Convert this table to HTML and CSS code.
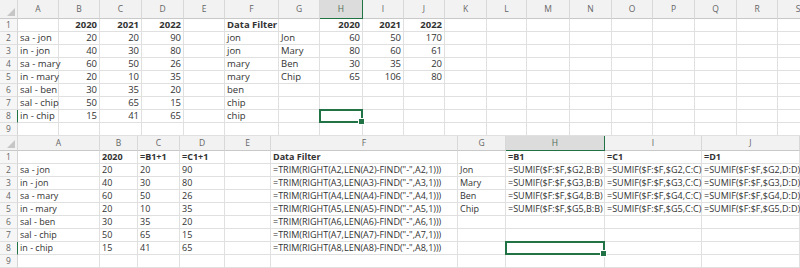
FILE: index.html
```html
<!DOCTYPE html>
<html lang="en">
<head>
    <meta charset="UTF-8">
    <title>Data Filter - SUMIF</title>
    <link rel="stylesheet" href="styles.css">
</head>
<body>

<!-- 结果视图 -->
<table class="sheet values">
    <colgroup>
        <col class="w18"><col class="w41"><col class="w41"><col class="w42"><col class="w42"><col class="w41"><col class="w54"><col class="w41"><col class="w43"><col class="w41"><col class="w41"><col class="w42"><col class="w40"><col class="w43"><col class="w42"><col class="w41"><col class="w42"><col class="w42"><col class="w41"><col class="w41">
    </colgroup>
    <tr class="head">
        <th class="corner"></th><th>A</th><th>B</th><th>C</th><th>D</th><th>E</th><th>F</th><th>G</th><th class="active">H</th><th>I</th><th>J</th><th>K</th><th>L</th><th>M</th><th>N</th><th>O</th><th>P</th><th>Q</th><th>R</th><th>S</th>
    </tr>
    <tr>
        <th>1</th><td></td><td class="num b">2020</td><td class="num b">2021</td><td class="num b">2022</td><td></td><td class="b">Data Filter</td><td></td><td class="num b">2020</td><td class="num b">2021</td><td class="num b">2022</td><td></td><td></td><td></td><td></td><td></td><td></td><td></td><td></td><td></td>
    </tr>
    <tr>
        <th>2</th><td>sa - jon</td><td class="num">20</td><td class="num">20</td><td class="num">90</td><td></td><td>jon</td><td>Jon</td><td class="num">60</td><td class="num">50</td><td class="num">170</td><td></td><td></td><td></td><td></td><td></td><td></td><td></td><td></td><td></td>
    </tr>
    <tr>
        <th>3</th><td>in - jon</td><td class="num">40</td><td class="num">30</td><td class="num">80</td><td></td><td>jon</td><td>Mary</td><td class="num">80</td><td class="num">60</td><td class="num">61</td><td></td><td></td><td></td><td></td><td></td><td></td><td></td><td></td><td></td>
    </tr>
    <tr>
        <th>4</th><td>sa - mary</td><td class="num">60</td><td class="num">50</td><td class="num">26</td><td></td><td>mary</td><td>Ben</td><td class="num">30</td><td class="num">35</td><td class="num">20</td><td></td><td></td><td></td><td></td><td></td><td></td><td></td><td></td><td></td>
    </tr>
    <tr>
        <th>5</th><td>in - mary</td><td class="num">20</td><td class="num">10</td><td class="num">35</td><td></td><td>mary</td><td>Chip</td><td class="num">65</td><td class="num">106</td><td class="num">80</td><td></td><td></td><td></td><td></td><td></td><td></td><td></td><td></td><td></td>
    </tr>
    <tr>
        <th>6</th><td>sal - ben</td><td class="num">30</td><td class="num">35</td><td class="num">20</td><td></td><td>ben</td><td></td><td></td><td></td><td></td><td></td><td></td><td></td><td></td><td></td><td></td><td></td><td></td><td></td>
    </tr>
    <tr>
        <th>7</th><td>sal - chip</td><td class="num">50</td><td class="num">65</td><td class="num">15</td><td></td><td>chip</td><td></td><td></td><td></td><td></td><td></td><td></td><td></td><td></td><td></td><td></td><td></td><td></td><td></td>
    </tr>
    <tr>
        <th class="active">8</th><td>in - chip</td><td class="num">15</td><td class="num">41</td><td class="num">65</td><td></td><td>chip</td><td></td><td class="sel"></td><td></td><td></td><td></td><td></td><td></td><td></td><td></td><td></td><td></td><td></td><td></td>
    </tr>
    <tr>
        <th>9</th><td></td><td></td><td></td><td></td><td></td><td></td><td></td><td></td><td></td><td></td><td></td><td></td><td></td><td></td><td></td><td></td><td></td><td></td><td></td>
    </tr>
</table>

<!-- 公式视图 -->
<table class="sheet formulas">
    <colgroup>
        <col class="w18"><col class="w82"><col class="w38"><col class="w42"><col class="w45"><col class="w46"><col class="w187"><col class="w48"><col class="w99"><col class="w97"><col class="w98">
    </colgroup>
    <tr class="head">
        <th class="corner"></th><th>A</th><th>B</th><th>C</th><th>D</th><th>E</th><th>F</th><th>G</th><th class="active">H</th><th>I</th><th>J</th>
    </tr>
    <tr>
        <th>1</th><td></td><td class="b">2020</td><td class="b">=B1+1</td><td class="b">=C1+1</td><td></td><td class="b">Data Filter</td><td></td><td class="b">=B1</td><td class="b">=C1</td><td class="b">=D1</td>
    </tr>
    <tr>
        <th>2</th><td>sa - jon</td><td>20</td><td>20</td><td>90</td><td></td><td>=TRIM(RIGHT(A2,LEN(A2)-FIND("-",A2,1)))</td><td>Jon</td><td>=SUMIF($F:$F,$G2,B:B)</td><td>=SUMIF($F:$F,$G2,C:C)</td><td>=SUMIF($F:$F,$G2,D:D)</td>
    </tr>
    <tr>
        <th>3</th><td>in - jon</td><td>40</td><td>30</td><td>80</td><td></td><td>=TRIM(RIGHT(A3,LEN(A3)-FIND("-",A3,1)))</td><td>Mary</td><td>=SUMIF($F:$F,$G3,B:B)</td><td>=SUMIF($F:$F,$G3,C:C)</td><td>=SUMIF($F:$F,$G3,D:D)</td>
    </tr>
    <tr>
        <th>4</th><td>sa - mary</td><td>60</td><td>50</td><td>26</td><td></td><td>=TRIM(RIGHT(A4,LEN(A4)-FIND("-",A4,1)))</td><td>Ben</td><td>=SUMIF($F:$F,$G4,B:B)</td><td>=SUMIF($F:$F,$G4,C:C)</td><td>=SUMIF($F:$F,$G4,D:D)</td>
    </tr>
    <tr>
        <th>5</th><td>in - mary</td><td>20</td><td>10</td><td>35</td><td></td><td>=TRIM(RIGHT(A5,LEN(A5)-FIND("-",A5,1)))</td><td>Chip</td><td>=SUMIF($F:$F,$G5,B:B)</td><td>=SUMIF($F:$F,$G5,C:C)</td><td>=SUMIF($F:$F,$G5,D:D)</td>
    </tr>
    <tr>
        <th>6</th><td>sal - ben</td><td>30</td><td>35</td><td>20</td><td></td><td>=TRIM(RIGHT(A6,LEN(A6)-FIND("-",A6,1)))</td><td></td><td></td><td></td><td></td>
    </tr>
    <tr>
        <th>7</th><td>sal - chip</td><td>50</td><td>65</td><td>15</td><td></td><td>=TRIM(RIGHT(A7,LEN(A7)-FIND("-",A7,1)))</td><td></td><td></td><td></td><td></td>
    </tr>
    <tr>
        <th class="active">8</th><td>in - chip</td><td>15</td><td>41</td><td>65</td><td></td><td>=TRIM(RIGHT(A8,LEN(A8)-FIND("-",A8,1)))</td><td></td><td class="sel"></td><td></td><td></td>
    </tr>
    <tr>
        <th>9</th><td></td><td></td><td></td><td></td><td></td><td></td><td></td><td></td><td></td><td></td>
    </tr>
</table>

</body>
</html>
```

FILE: styles.css
```css
body {
    margin: 0;
    background: #fff;
    overflow: hidden;
    font-family: "Open Sans", "Liberation Sans", sans-serif;
}
.sheet {
    border-collapse: separate;
    border-spacing: 0;
    table-layout: fixed;
}
.values {
    width: 819px;
}
.formulas {
    width: 800px;
}
.w18 { width: 18px; }
.w38 { width: 38px; }
.w40 { width: 40px; }
.w41 { width: 41px; }
.w42 { width: 42px; }
.w43 { width: 43px; }
.w45 { width: 45px; }
.w46 { width: 46px; }
.w48 { width: 48px; }
.w54 { width: 54px; }
.w82 { width: 82px; }
.w97 { width: 97px; }
.w98 { width: 98px; }
.w99 { width: 99px; }
.w187 { width: 187px; }

.sheet td, .sheet th {
    padding: 0 2px;
    border-right: 1px solid #e0e0e0;
    border-bottom: 1px solid #e0e0e0;
    font-size: 9.5px;
    line-height: 12px;
    height: 12px;
    color: #333;
    white-space: nowrap;
    overflow: visible;
    text-align: left;
    font-weight: normal;
}
/* 公式列字体稍窄 */
.formulas td {
    font-size: 9px;
}
/* 行号 */
.sheet th {
    background: #f6f6f6;
    color: #666;
    font-size: 8.5px;
    text-align: center;
    padding: 0;
    border-right-color: #d4d4d4;
}
/* 列标题 */
.sheet .head th {
    background: #f2f2f2;
    border-bottom: 1px solid #c9c9c9;
    border-right-color: #d8d8d8;
}
.values .head th {
    height: 18px;
    line-height: 18px;
}
.formulas .head th {
    height: 14px;
    line-height: 14px;
}
.sheet .head th.active {
    background: #dcdcdc;
    color: #4d6b5a;
    border-bottom: 1px solid #217346;
}
.sheet th.active {
    border-right: 1px solid #217346;
}
.corner {
    position: relative;
}
.corner::after {
    content: "";
    position: absolute;
    right: 2px;
    bottom: 2px;
    border-left: 8px solid transparent;
    border-bottom: 8px solid #c6c6c6;
}
.num {
    text-align: right !important;
}
.b {
    font-weight: bold !important;
}
/* 选中单元格 */
.sel {
    position: relative;
}
.sel::before {
    content: "";
    position: absolute;
    left: -1px;
    top: -1px;
    right: -1px;
    bottom: -1px;
    border: 2px solid #217346;
}
.sel::after {
    content: "";
    position: absolute;
    right: -3px;
    bottom: -3px;
    width: 5px;
    height: 5px;
    background: #217346;
    border: 1px solid #fff;
}
```
